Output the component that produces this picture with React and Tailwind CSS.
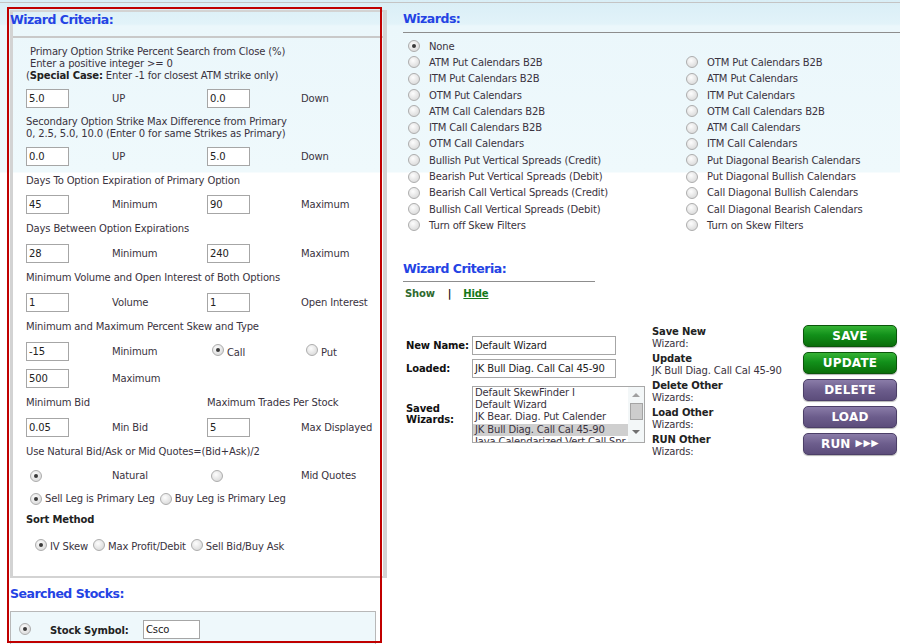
import React from 'react';

const LEFT_WIZ = [
    'ATM Put Calendars B2B',
    'ITM Put Calendars B2B',
    'OTM Put Calendars',
    'ATM Call Calendars B2B',
    'ITM Call Calendars B2B',
    'OTM Call Calendars',
    'Bullish Put Vertical Spreads (Credit)',
    'Bearish Put Vertical Spreads (Debit)',
    'Bearish Call Vertical Spreads (Credit)',
    'Bullish Call Vertical Spreads (Debit)',
    'Turn off Skew Filters',
];

const RIGHT_WIZ = [
    'OTM Put Calendars B2B',
    'ATM Put Calendars',
    'ITM Put Calendars',
    'OTM Call Calendars B2B',
    'ATM Call Calendars',
    'ITM Call Calendars',
    'Put Diagonal Bearish Calendars',
    'Put Diagonal Bullish Calendars',
    'Call Diagonal Bullish Calendars',
    'Call Diagonal Bearish Calendars',
    'Turn on Skew Filters',
];

const SAVED = [
    'Default SkewFinder I',
    'Default Wizard',
    'JK Bear. Diag. Put Calender',
    'JK Bull Diag. Call Cal 45-90',
    'Java Calendarized Vert Call Spr',
];

function Radio({ checked }) {
    return (
        <span className="inline-flex w-[12px] h-[12px] shrink-0 items-center justify-center rounded-full border border-[#adadad] bg-[radial-gradient(circle_at_40%_35%,#fdfdfd,#d2d2d2)]">
            {checked && <span className="w-[4px] h-[4px] rounded-full bg-[#3a3a3a]" />}
        </span>
    );
}

function Field({ value, className = 'w-[43px]' }) {
    return (
        <div className={`h-[19px] border border-[#a6a6a6] bg-white px-[2px] leading-[17px] text-[#222] ${className}`}>
            {value}
        </div>
    );
}

// four-column row used by the criteria form
function Row4({ a, b, c, d, className = '' }) {
    return (
        <div className={`grid grid-cols-[86px_95px_94px_1fr] items-center h-[19px] ${className}`}>
            <div>{a}</div>
            <div>{b}</div>
            <div>{c}</div>
            <div>{d}</div>
        </div>
    );
}

function Btn({ children, tone }) {
    const cls = tone === 'green'
        ? 'bg-[linear-gradient(to_bottom,#35b335,#12901a_45%,#0a6e0a)] border-[#0b560b]'
        : 'bg-[linear-gradient(to_bottom,#8a7ca8,#6c5d8c_50%,#5c4d7b)] border-[#4c3f68]';
    return (
        <div className={`h-[22px] w-[94px] rounded-[5px] border flex items-center justify-center text-white font-bold text-[12px] tracking-[0.2px] shadow-[0_1px_1px_rgba(0,0,0,0.3)] ${cls}`}>
            {children}
        </div>
    );
}

export default function App() {
    return (
        <div className="w-[900px] h-[644px] overflow-hidden pt-[2px] font-['DejaVu_Sans',Verdana,sans-serif] text-[10px] tracking-[-0.15px] text-[#3a3340] bg-[linear-gradient(to_bottom,#d9eef6_0px,#e2f3f9_24px,#ebf7fb_26px,#eff9fc_172px,#ffffff_173px)]">
            <div className="border-t border-[#c4c4c4] flex">
                {/* Left column */}
                <div className="relative w-[377px] shrink-0 ml-[10px] mt-[7px]">
                    <div className="absolute -top-[3px] -left-[3px] w-[375px] h-[636px] border-[2.5px] border-[#c00000] pointer-events-none z-10" />

                    <div className="border-l-[3px] border-t-[2px] border-r-[4px] border-b-[2px] border-[#d3d3d3]">
                        <div className="-ml-[3px] h-[24px] text-[12.5px] leading-[16px] font-bold tracking-[-0.5px] text-[#2443e4]">
                            Wizard Criteria:
                        </div>
                        <div className="border-t-[2px] border-[#c9c9c9] pt-[8px] pl-[13px] pb-[23px] leading-[12px]">
                            <div className="pl-[4px]">Primary Option Strike Percent Search from Close (%)</div>
                            <div className="pl-[4px]">Enter a positive integer &gt;= 0</div>
                            <div>(<b className="text-[#222]">Special Case:</b> Enter -1 for closest ATM strike only)</div>
                            <Row4 className="mt-[7px]" a={<Field value="5.0" />} b="UP" c={<Field value="0.0" />} d="Down" />

                            <div className="mt-[8px]">Secondary Option Strike Max Difference from Primary</div>
                            <div>0, 2.5, 5.0, 10.0 (Enter 0 for same Strikes as Primary)</div>
                            <Row4 className="mt-[7px]" a={<Field value="0.0" />} b="UP" c={<Field value="5.0" />} d="Down" />

                            <div className="mt-[9px]">Days To Option Expiration of Primary Option</div>
                            <Row4 className="mt-[8px]" a={<Field value="45" />} b="Minimum" c={<Field value="90" />} d="Maximum" />

                            <div className="mt-[9px]">Days Between Option Expirations</div>
                            <Row4 className="mt-[9px]" a={<Field value="28" />} b="Minimum" c={<Field value="240" />} d="Maximum" />

                            <div className="mt-[9px]">Minimum Volume and Open Interest of Both Options</div>
                            <Row4 className="mt-[9px]" a={<Field value="1" />} b="Volume" c={<Field value="1" />} d="Open Interest" />

                            <div className="mt-[9px]">Minimum and Maximum Percent Skew and Type</div>
                            <Row4
                                className="mt-[9px]"
                                a={<Field value="-15" />}
                                b="Minimum"
                                c={
                                    <div className="flex items-start ml-[5px] gap-[3px]">
                                        <Radio checked />
                                        <span className="mt-[3px]">Call</span>
                                    </div>
                                }
                                d={
                                    <div className="flex items-start ml-[5px] gap-[3px]">
                                        <Radio />
                                        <span className="mt-[3px]">Put</span>
                                    </div>
                                }
                            />
                            <Row4 className="mt-[8px]" a={<Field value="500" />} b="Maximum" c="" d="" />

                            <div className="mt-[9px] grid grid-cols-[181px_1fr]">
                                <div>Minimum Bid</div>
                                <div>Maximum Trades Per Stock</div>
                            </div>
                            <Row4 className="mt-[9px]" a={<Field value="0.05" />} b="Min Bid" c={<Field value="5" />} d="Max Displayed" />

                            <div className="mt-[9px]">Use Natural Bid/Ask or Mid Quotes=(Bid+Ask)/2</div>
                            <Row4
                                className="mt-[8px]"
                                a={<span className="ml-[4px] flex"><Radio checked /></span>}
                                b="Natural"
                                c={<span className="ml-[4px] flex"><Radio /></span>}
                                d="Mid Quotes"
                            />

                            <div className="mt-[4px] h-[19px] flex items-center ml-[4px]">
                                <Radio checked />
                                <span className="ml-[3px]">Sell Leg is Primary Leg</span>
                                <span className="ml-[5px] flex"><Radio /></span>
                                <span className="ml-[3px]">Buy Leg is Primary Leg</span>
                            </div>

                            <div className="mt-[6px] font-bold text-[#222]">Sort Method</div>

                            <div className="mt-[13px] flex items-start ml-[9px]">
                                <Radio checked />
                                <span className="ml-[3px] mt-[2px]">IV Skew</span>
                                <span className="ml-[5px] flex"><Radio /></span>
                                <span className="ml-[3px] mt-[2px]">Max Profit/Debit</span>
                                <span className="ml-[5px] flex"><Radio /></span>
                                <span className="ml-[3px] mt-[2px]">Sell Bid/Buy Ask</span>
                            </div>
                        </div>
                    </div>

                    <div className="mt-[8px] text-[12.5px] leading-[16px] font-bold tracking-[-0.5px] text-[#2443e4]">
                        Searched Stocks:
                    </div>
                    <div className="mt-[9px] w-[366px] h-[50px] border border-[#b8b8b8] bg-[#eef8fb] pt-[8px] pl-[8px] flex items-start">
                        <span className="mt-[3px] flex"><Radio checked /></span>
                        <span className="ml-[19px] mt-[3px] w-[93px] font-bold text-[#222]">Stock Symbol:</span>
                        <Field value="Csco" className="w-[57px]" />
                    </div>
                </div>

                {/* Right column */}
                <div className="ml-[16px] flex-1 pt-[8px]">
                    <div className="text-[12.5px] leading-[16px] font-bold tracking-[-0.5px] text-[#2443e4] pb-[5px] border-b border-[#8d8d8d]">
                        Wizards:
                    </div>
                    <div className="mt-[5px] grid grid-cols-[278px_1fr]">
                        <div className="h-[16.3px] flex items-center">
                            <span className="ml-[5px] flex"><Radio checked /></span>
                            <span className="ml-[9px]">None</span>
                        </div>
                        <div />
                        {LEFT_WIZ.map((l, i) => (
                            <React.Fragment key={l}>
                                <div className="h-[16.3px] flex items-center">
                                    <span className="ml-[5px] flex"><Radio /></span>
                                    <span className="ml-[9px]">{l}</span>
                                </div>
                                <div className="h-[16.3px] flex items-center">
                                    <span className="ml-[5px] flex"><Radio /></span>
                                    <span className="ml-[9px]">{RIGHT_WIZ[i]}</span>
                                </div>
                            </React.Fragment>
                        ))}
                    </div>

                    <div className="mt-[27px] w-[192px] text-[12.5px] leading-[16px] font-bold tracking-[-0.5px] text-[#2443e4] pb-[4px] border-b border-[#8d8d8d]">
                        Wizard Criteria:
                    </div>
                    <div className="mt-[6px] leading-[12px] flex font-bold">
                        <span className="ml-[2px] text-[#2f6a2f]">Show</span>
                        <span className="ml-[13px] text-[#111]">|</span>
                        <span className="ml-[12px] text-[#13791a] underline">Hide</span>
                    </div>

                    <div className="mt-[25px] flex items-start">
                        {/* form */}
                        <div className="w-[242px] pt-[11px]">
                            <div className="flex items-center">
                                <span className="w-[69px] pl-[3px] font-bold text-[#111]">New Name:</span>
                                <Field value="Default Wizard" className="w-[144px]" />
                            </div>
                            <div className="mt-[4px] flex items-center">
                                <span className="w-[69px] pl-[3px] font-bold text-[#111]">Loaded:</span>
                                <Field value="JK Bull Diag. Call Cal 45-90" className="w-[144px]" />
                            </div>
                            <div className="mt-[8px] flex items-center">
                                <span className="w-[69px] pl-[3px] font-bold text-[#111] leading-[11px]">Saved<br />Wizards:</span>
                                <div className="w-[173px] h-[57px] border border-[#a8a8a8] bg-white flex overflow-hidden">
                                    <div className="flex-1 overflow-hidden">
                                        {SAVED.map((s, i) => (
                                            <div key={s} className={`h-[12.4px] leading-[12.4px] pl-[2px] whitespace-nowrap ${i === 3 ? 'bg-[#cfcfcf]' : ''}`}>
                                                {s}
                                            </div>
                                        ))}
                                    </div>
                                    <div className="w-[16px] bg-[#f3f7f8] flex flex-col items-center">
                                        <span className="mt-[6px] w-0 h-0 border-l-[4px] border-r-[4px] border-b-[4px] border-l-transparent border-r-transparent border-b-[#a0a0a0]" />
                                        <span className="mt-[6px] w-[13px] h-[17px] bg-[#cdcdcd] border border-[#a4a4a4]" />
                                        <span className="mt-[10px] w-0 h-0 border-l-[4px] border-r-[4px] border-t-[4px] border-l-transparent border-r-transparent border-t-[#707070]" />
                                    </div>
                                </div>
                            </div>
                        </div>

                        {/* info */}
                        <div className="ml-[7px] w-[151px] leading-[12px]">
                            {[
                                ['Save New', 'Wizard:'],
                                ['Update', 'JK Bull Diag. Call Cal 45-90'],
                                ['Delete Other', 'Wizards:'],
                                ['Load Other', 'Wizards:'],
                                ['RUN Other', 'Wizards:'],
                            ].map(([a, b]) => (
                                <div key={a} className="h-[27px] pt-[1px]">
                                    <div className="font-bold text-[#222]">{a}</div>
                                    <div>{b}</div>
                                </div>
                            ))}
                        </div>

                        {/* buttons */}
                        <div className="flex flex-col gap-[5px]">
                            <Btn tone="green">SAVE</Btn>
                            <Btn tone="green">UPDATE</Btn>
                            <Btn>DELETE</Btn>
                            <Btn>LOAD</Btn>
                            <Btn>
                                RUN<span className="ml-[5px] text-[9.5px] tracking-[0.5px]">▶▶▶</span>
                            </Btn>
                        </div>
                    </div>
                </div>
            </div>
        </div>
    );
}
